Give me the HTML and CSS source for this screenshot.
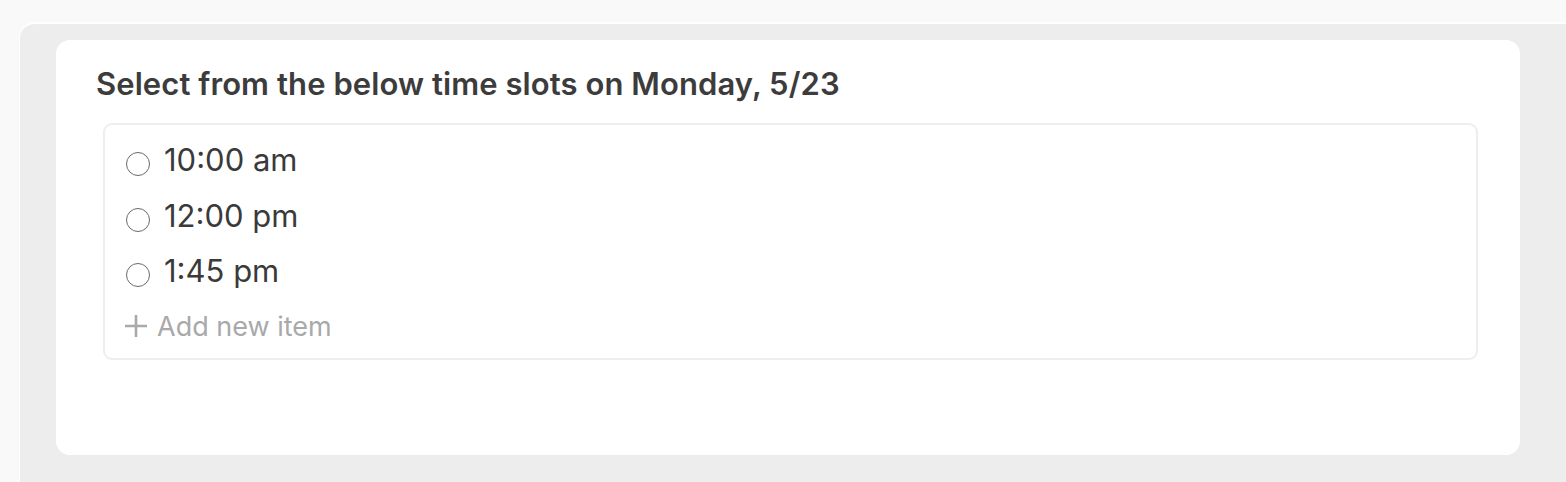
FILE: index.html
```html
<!DOCTYPE html>
<html>
<head>
<meta charset="utf-8">
<link rel="stylesheet" href="styles.css">
</head>
<body>
<div class="panel">
  <div class="card">
    <h2 class="title">Select from the below time slots on Monday, 5/23</h2>
    <div class="list">
      <label class="item"><span class="radio"></span><span class="label">10:00 am</span></label>
      <label class="item"><span class="radio"></span><span class="label">12:00 pm</span></label>
      <label class="item"><span class="radio"></span><span class="label">1:45 pm</span></label>
      <div class="add">
        <svg class="plus" width="24" height="24" viewBox="0 0 24 24"><path d="M12 1v22M1 12h22" stroke="#a9a9a9" stroke-width="2.6" fill="none"/></svg>
        <span>Add new item</span>
      </div>
    </div>
  </div>
</div>
</body>
</html>
```
FILE: styles.css
```css
html, body {
  margin: 0;
  padding: 0;
  background: #f9f9f9;
  height: 100%;
  overflow: hidden;
}
body {
  padding: 22px 0 0 19px;
  box-sizing: border-box;
  font-family: Inter, "Noto Sans", sans-serif;
}
.panel {
  background: #ededed;
  border-top: 2px solid #ffffff;
  border-left: 1px solid #ffffff;
  border-top-left-radius: 16px;
  height: 100%;
  box-sizing: border-box;
  padding: 16px 46px 0 36px;
}
.card {
  background: #ffffff;
  border-radius: 14px;
  height: 415px;
  box-sizing: border-box;
  padding: 26px 42px 0 40px;
}
.title {
  margin: 0;
  font-size: 31px;
  font-weight: 600;
  color: #3c3c3c;
  line-height: 36px;
  letter-spacing: 0.08px;
}
.list {
  margin: 21px 0 0 7px;
  border: 2px solid #eeeeee;
  border-radius: 9px;
  height: 237px;
  box-sizing: border-box;
  padding: 7px 0 0 21px;
}
.item {
  display: flex;
  align-items: center;
  gap: 14px;
  height: 55.5px;
}
.radio {
  width: 24px;
  height: 24px;
  margin-top: 9px;
  border: 1.6px solid #696969;
  border-radius: 50%;
  box-sizing: border-box;
  flex: none;
}
.label {
  font-size: 31px;
  color: #3a3a3a;
}
.add {
  display: flex;
  align-items: center;
  gap: 9px;
  height: 55px;
  margin-left: -2px;
  color: #a9a9a9;
  font-size: 27px;
}
.plus { flex: none; }
```
